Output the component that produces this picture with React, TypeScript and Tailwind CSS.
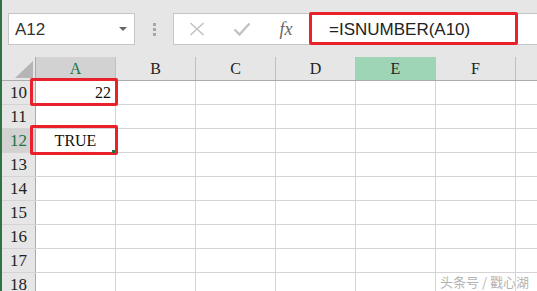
import React from 'react';

const cols = ['A', 'B', 'C', 'D', 'E', 'F', 'G'];
const rows = [10, 11, 12, 13, 14, 15, 16, 17, 18];

function ColHeader({ c }: { c: string }) {
  let cls = 'bg-[#e6e6e6] text-[#222]';
  if (c === 'A') cls = 'bg-[#d2d2d2] text-[#217346]';
  if (c === 'E') cls = 'bg-[#9fd5b7] text-[#222]';
  return (
    <div
      className={`w-[80px] shrink-0 h-full border-r border-[#c0c0c0] flex items-center justify-center text-[16px] ${cls}`}
    >
      {c === 'G' ? '' : c}
    </div>
  );
}

export default function App() {
  return (
    <div
      className="relative w-[537px] h-[291px] overflow-hidden bg-white flex"
      style={{ fontFamily: '"Liberation Serif", "Times New Roman", serif' }}
    >
      <div className="w-[2px] shrink-0 bg-[#2f7345]" />
      <div className="flex-1 flex flex-col min-w-0">
        {/* toolbar */}
        <div
          className="h-[57px] shrink-0 bg-[#e6e6e6] flex items-start pt-[13px] pl-[6px]"
          style={{ fontFamily: '"Liberation Sans", Arial, sans-serif' }}
        >
          <div className="w-[127px] h-[32px] shrink-0 bg-white border border-[#c6c6c6] flex items-center pl-[6px] pr-[7px]">
            <span className="text-[17px] text-[#333] leading-none">A12</span>
            <div className="flex-1" />
            <svg width="8" height="5" viewBox="0 0 8 5">
              <path d="M0 0 L8 0 L4 4 Z" fill="#666" />
            </svg>
          </div>
          <div className="w-[38px] h-[32px] shrink-0 flex flex-col items-center justify-center gap-[2px] pl-[1px]">
            <div className="w-[3px] h-[3px] bg-[#a6a6a6]" />
            <div className="w-[3px] h-[3px] bg-[#a6a6a6]" />
            <div className="w-[3px] h-[3px] bg-[#a6a6a6]" />
          </div>
          <div className="flex-1 h-[32px] bg-white border border-[#c6c6c6] border-r-0 flex items-center">
            <div className="w-[45px] shrink-0 flex justify-center pl-[1px]">
              <svg width="16" height="14" viewBox="0 0 16 14">
                <path d="M1.5 1 L14.5 13 M14.5 1 L1.5 13" stroke="#c2c2c2" strokeWidth="1.6" />
              </svg>
            </div>
            <div className="w-[45px] shrink-0 flex justify-center">
              <svg width="18" height="14" viewBox="0 0 18 14">
                <path d="M1.5 7.5 L6.5 12.5 L16.5 1.5" stroke="#c2c2c2" strokeWidth="2.4" fill="none" />
              </svg>
            </div>
            <div
              className="w-[44px] shrink-0 flex justify-center text-[18px] italic text-[#666] leading-none"
              style={{ fontFamily: '"Liberation Serif", "Times New Roman", serif' }}
            >
              fx
            </div>
            <div className="pl-[21px] text-[17px] text-[#222] leading-none">=ISNUMBER(A10)</div>
          </div>
        </div>
        {/* header row */}
        <div className="h-[24px] shrink-0 flex border-b border-[#ababab] bg-[#e6e6e6]">
          <div className="w-[34px] shrink-0 h-full border-r border-[#ababab] flex items-end justify-end pr-[2px] pb-[2px]">
            <svg width="18" height="17" viewBox="0 0 18 17">
              <path d="M18 0 L18 17 L0 17 Z" fill="#b5b5b5" />
            </svg>
          </div>
          {cols.map((c) => (
            <ColHeader key={c} c={c} />
          ))}
        </div>
        {/* rows */}
        {rows.map((r) => (
          <div key={r} className="h-[24px] shrink-0 flex border-b border-[#d4d4d4]">
            <div
              className={`w-[34px] shrink-0 h-full border-r border-[#ababab] flex items-center justify-center text-[17px] ${
                r === 12 ? 'bg-[#d2d2d2] text-[#217346]' : 'bg-[#e6e6e6] text-[#222]'
              }`}
            >
              {r}
            </div>
            {cols.map((c) => (
              <div
                key={c}
                className={`w-[80px] shrink-0 h-full border-r border-[#d4d4d4] flex items-center text-[16px] text-[#111] ${
                  c === 'A' && r === 10 ? 'justify-end pr-[4px]' : 'justify-center'
                }`}
              >
                {c === 'A' && r === 10 ? '22' : c === 'A' && r === 12 ? 'TRUE' : ''}
              </div>
            ))}
          </div>
        ))}
      </div>

      {/* red annotation boxes */}
      <div className="absolute left-[309px] top-[12px] w-[209px] h-[33px] border-[3px] border-[#e8212b] rounded-[2px]" />
      <div className="absolute left-[30px] top-[78px] w-[88px] h-[28px] border-[3px] border-[#e8212b] rounded-[2px]" />
      <div className="absolute left-[30px] top-[125px] w-[88px] h-[30px] border-[3px] border-[#e8212b] rounded-[2px]" />
      <div className="absolute left-[112px] top-[150px] w-[3px] h-[3px] bg-[#217346]" />

      {/* watermark */}
      <div
        className="absolute right-[8px] bottom-[3px] text-[13px] text-[#b4b4b4] leading-none"
        style={{
          fontFamily: '"Noto Sans CJK SC", sans-serif',
          textShadow: '0 0 2px #fff, 0 0 2px #fff',
        }}
      >
        头条号 / 戳心湖
      </div>
    </div>
  );
}
